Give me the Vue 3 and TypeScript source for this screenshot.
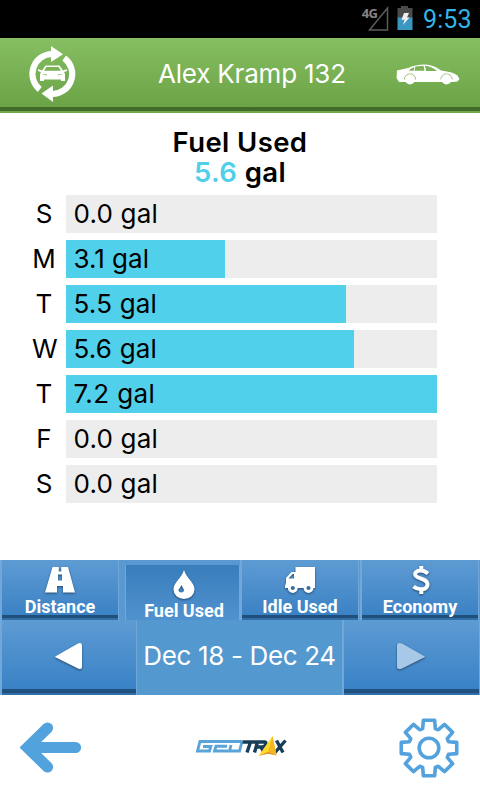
<script setup lang="ts">
interface Day { label: string; gallons: number; text: string; tone?: string }
const max = 7.2
const days: Day[] = [
  { label: 'S', gallons: 0, text: '0.0 gal' },
  { label: 'M', gallons: 3.09, text: '3.1 gal', tone: 'one' },
  { label: 'T', gallons: 5.45, text: '5.5 gal' },
  { label: 'W', gallons: 5.6, text: '5.6 gal' },
  { label: 'T', gallons: 7.2, text: '7.2 gal', tone: 'seven' },
  { label: 'F', gallons: 0, text: '0.0 gal' },
  { label: 'S', gallons: 0, text: '0.0 gal' },
]
const tabs = ['Distance', 'Fuel Used', 'Idle Used', 'Economy']
const teeth = [0, 45, 90, 135, 180, 225, 270, 315]
function gearPath(): string {
  const pts: string[] = []
  for (const a of teeth) {
    for (const [r, off] of [[20.5, -18], [28.3, -11.5], [28.3, 11.5], [20.5, 18]]) {
      const t = ((a + off) * Math.PI) / 180
      pts.push(`${(30 + r * Math.cos(t)).toFixed(2)} ${(30 + r * Math.sin(t)).toFixed(2)}`)
    }
  }
  return 'M' + pts.join('L') + 'Z'
}
const gear = gearPath()
</script>

<template>
  <div class="screen">
    <div class="status">
      <span class="net">4G</span>
      <svg class="signal" width="22" height="26" viewBox="0 0 22 26">
        <path d="M2.500 24H20.500V2Z" fill="none" stroke="#5c5c5c" stroke-width="1.500" />
      </svg>
      <svg class="battery" width="16" height="24" viewBox="0 0 16 24">
        <path d="M4 0H11V2H15.500V12H.500V2H4Z" fill="#4a4a4a" />
        <path d="M.500 11.500H15.500V24H.500Z" fill="#3a97c2" />
        <path d="M7 7H12L10 11.500H12.500L6 19L7.500 13.800H4.500Z" fill="#eee" />
      </svg>
      <span class="clock">9:53</span>
    </div>

    <header class="header">
      <svg class="swap" width="48" height="58" viewBox="0 0 48 58">
        <g fill="none" stroke="#fff" stroke-width="6.200">
          <path d="M11.800 44.500A20 20 0 0 1 24 9" />
          <path d="M36.200 13A20 20 0 0 1 24 49" />
        </g>
        <path d="M23 1L35 9.200L23 17Z M25 40.500V57L13.500 48.500Z" fill="#fff" />
        <path fill="#fff" fill-rule="evenodd" d="M17.500 20.500H31.500L35 25.500L37.500 24.500H39V26L36 27L37 29V36H33V34.500H16V36H12V29L13 27L10 26V24.500H11.500L14 25.500ZM18.500 22L16 25.800H33L30.500 22ZM13 28.700L19 30.500V29.500ZM36 28.700L30 29.500V30.500Z" />
      </svg>
      <span class="driver">Alex Kramp 132</span>
      <svg class="sedan" width="64" height="22" viewBox="0 0 64 22">
        <path fill="#fff" fill-rule="evenodd" d="M1 6.500L12 4Q19 .500 29 .500Q38 1 45 6.500Q58 8 61.500 11.500L63.500 15L61.500 17.500L57 18H3L.500 14ZM14.500 5L13 6.700H17.500L18.500 3ZM19.500 2.500L18.500 6.700H28.500L27.500 1.800ZM29 1.800L30 7H41Q36 2.500 29 1.800Z" />
        <path d="M8.400 15.500A5.600 5.600 0 0 1 19.600 15.500M44.900 15.500A5.600 5.600 0 0 1 56.100 15.500" fill="none" stroke="#75ab50" stroke-width=".8" />
        <g fill="#fff"><circle cx="14" cy="15.500" r="5" /><circle cx="50.500" cy="15.500" r="5" /></g>
      </svg>
    </header>

    <main class="chart">
      <h1 class="title">Fuel Used</h1>
      <div class="total"><span class="amount">5.6</span> gal</div>
      <div v-for="(d, i) in days" :key="i" class="row">
        <span class="day">{{ d.label }}</span>
        <div class="track">
          <div class="fill" :style="{ width: (d.gallons / max) * 100 + '%' }"></div>
          <span class="value" :class="d.tone">{{ d.text }}</span>
        </div>
      </div>
    </main>

    <nav class="tabs">
      <div v-for="(t, i) in tabs" :key="t" class="tab" :class="{ active: i === 1 }">
        <svg class="tab-icon" width="34" height="30" viewBox="0 0 34 30">
          <path v-if="i === 0" fill="#fff" fill-rule="evenodd" d="M9.500 1H25L32 26.500H2ZM15.800 1V5.500H18.200V1ZM15 8.500V14.500H19V8.500ZM14 20V26.500H20V20Z" />
          <path v-else-if="i === 1" fill="#fff" fill-rule="evenodd" d="M17 0C19 8 27.500 12 27.500 19.500A10.500 9.500 0 0 1 6.500 19.500C6.500 12 15 8 17 0ZM14.500 15C13.500 18 11.500 18.500 11.500 20.500A2.800 2.500 0 0 0 17 20.500C17 18.500 15.500 18 14.500 15Z" />
          <g v-else-if="i === 2">
            <path fill="#fff" fill-rule="evenodd" d="M12.500 1H32V22H2V20L3 17V12L8.500 6H12.500ZM9.500 8L5.500 12.500H11V8Z" />
            <g fill="#386d9e" stroke="#fff" stroke-width="2.800"><circle cx="9.800" cy="22" r="3.500" /><circle cx="25.500" cy="22" r="3.500" /></g>
          </g>
          <path v-else fill="none" stroke="#fff" stroke-width="4" d="M25 7.500Q21 4.500 18 4.500C13 4.500 11.500 7 12.500 9.500C14 13 24.500 12 24.500 18.500C24.500 24 16 25 10.500 20.500M18.300 0V5M18.300 23V28" />
        </svg>
        <span class="tab-label">{{ t }}</span>
      </div>
    </nav>

    <div class="range">
      <div class="step">
        <svg class="arrow" width="30" height="30" viewBox="0 0 30 30"><path d="M2 14L24 1.500Q28 0 28 4V25Q28 28 24 26.500L2 15.500Q.500 14.700 2 14Z" fill="#fff" /></svg>
      </div>
      <div class="dates">Dec 18 - Dec 24</div>
      <div class="step next">
        <svg class="arrow" width="30" height="30" viewBox="0 0 30 30"><path d="M28 14L6 1.500Q1 0 1 4V25Q1 28 6 26.500L28 15.500Q29.500 14.700 28 14Z" fill="#a7c8e7" /></svg>
      </div>
    </div>

    <footer class="footer">
      <svg width="62" height="54" viewBox="0 0 62 54">
        <path d="M27.500 7L7.500 26.500L27.500 46M8 26.500H55.500" fill="none" stroke="#52a2de" stroke-width="11.200" stroke-linecap="round" />
      </svg>
      <svg class="logo" width="94" height="24" viewBox="0 0 94 24">
        <g fill="none" stroke="#5ba4da" stroke-width="2.900">
          <path d="M20 5.500H6L3.500 15H15.500L16.800 10.500H9" />
          <path d="M19 5.500H48M34 15H20.500L22 10.300H33" />
          <path d="M48 5.500L45.500 15H35.500L37 9" />
        </g>
        <g fill="none" stroke="#173e58" stroke-width="3.400">
          <path d="M48.500 6H71Q73 6.500 71 9.500L69 11H62M56.500 6L53 16.500M60.500 16.500L63.500 6M67 11L70 16.500M82.500 4.500L89 16.500M91.500 4.500L81 16.500" />
        </g>
        <path d="M78.500 0L82.500 19.500L74 16.500L64.500 20Z" fill="#ffd928" />
        <path d="M78.500 0L82.500 19.500L74 16.500Z" fill="#f7b522" />
        <path d="M74 16L82.500 19.500L74 17.800L64.500 20Z" fill="#df8a24" />
      </svg>
      <svg width="60" height="60" viewBox="0 0 60 60">
        <path :d="gear" fill="none" stroke="#52a2de" stroke-width="3.600" stroke-linejoin="round" />
        <circle cx="30" cy="30" r="9.800" fill="none" stroke="#52a2de" stroke-width="3.600" />
      </svg>
    </footer>
  </div>
</template>

<style>
body { margin: 0; background: #fff; }
</style>
<style scoped>
.screen { width: 480px; height: 800px; display: flex; flex-direction: column; overflow: hidden; background: #fff; font-family: Inter, Roboto, sans-serif; color: #000; }
svg { display: block; flex: none; }
.status { height: 38px; flex: none; box-sizing: border-box; background: #000; display: flex; justify-content: flex-end; align-items: flex-start; padding: 6px 9px 0 0; }
.net { font: 700 13px/14px "Open Sans", sans-serif; color: #858585; letter-spacing: -.8px; margin-right: -10px; }
.signal { margin-right: 8px; }
.battery { margin-right: 1px; }
.clock { width: 48px; margin-left: 9px; font: 400 25px/28px Roboto, sans-serif; letter-spacing: .1px; color: #33b5e5; white-space: nowrap; }
.header { height: 75px; flex: none; box-sizing: border-box; display: flex; padding: 7px 20px 0 28px; background: linear-gradient(#86be62, #6ba346 69px, #426a2b 69px, #426a2b 73px, #70a84b 73px); }
.driver { width: 190px; margin-left: 82px; font-size: 26px; line-height: 58px; color: #fff; white-space: nowrap; letter-spacing: -.2px; }
.sedan { margin: 19px 0 0 auto; }
.chart { height: 447px; flex: none; box-sizing: border-box; padding: 14px 43.500px 0 32px; }
.title, .total { margin: 0 0 0 11.500px; height: 30px; font-size: 27.500px; line-height: 31px; font-weight: 600; text-align: center; letter-spacing: .4px; }
.total { margin-bottom: 8.400px; }
.amount { color: #50cfea; }
.row { height: 37.500px; margin-bottom: 7.500px; display: flex; }
.day { width: 24px; margin-right: 10px; font-size: 26px; line-height: 38px; text-align: center; }
.track { flex: 1; display: grid; background: #ededed; }
.fill, .value { grid-area: 1 / 1; }
.fill { background: #50d0ea; height: 37.500px; }
.value { font-size: 26px; line-height: 38px; padding-left: 7.500px; white-space: nowrap; letter-spacing: .2px; }
.value.one { letter-spacing: 0; }
.value.seven { letter-spacing: .4px; }
.tabs { height: 60px; flex: none; display: grid; grid-template-columns: repeat(4, 120px); background: #5998d0; }
.tab { box-sizing: border-box; margin-right: 1px; border-left: 2px solid #71a7d9; border-right: 1px solid #71a7d9; background: linear-gradient(#5e9bd3, #3b82c5 55px, #214f7b 55px, #214f7b 58px, #326fa8 58px); display: flex; flex-direction: column; align-items: center; padding-top: 6px; }
.tab.active { margin: 5px 0 0 5px; border-left-width: 1px; background: linear-gradient(#387dbc, #5193cf); padding: 5px 0 0 3px; }
.tab-icon, .arrow { filter: drop-shadow(0 1px 1px #25496e); }
.tab-label { font: 700 18px/22px Roboto, sans-serif; color: #fff; white-space: nowrap; }
.range { height: 75px; flex: none; display: grid; grid-template-columns: 137px 205px 138px; background: #5398cf; }
.step { box-sizing: border-box; border-left: 2px solid #71a7d9; border-right: 1px solid #71a7d9; background: linear-gradient(#5e9bd3, #3982c6 69px, #21517f 69px, #21517f 73px, #326fa8 73px); display: flex; justify-content: center; padding: 22px 0 0 0; }
.next { padding-right: 1px; }
.dates { font-size: 26px; line-height: 72px; color: #fff; text-align: center; white-space: nowrap; letter-spacing: -.35px; }
.footer { flex: 1; display: flex; align-items: center; justify-content: space-between; padding: 0 21px 0 20px; }
.logo { margin-left: 1px; }
</style>
